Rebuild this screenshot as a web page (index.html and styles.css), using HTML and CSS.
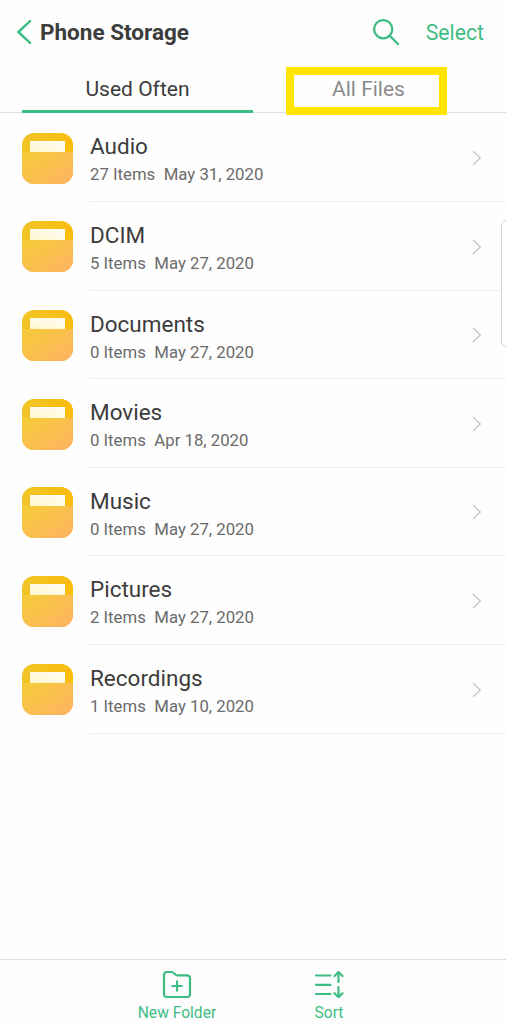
FILE: index.html
```html
<!DOCTYPE html>
<html lang="en">
<head>
<meta charset="utf-8">
<title>Phone Storage</title>
<link rel="stylesheet" href="styles.css">
</head>
<body>
<svg class="defs" width="0" height="0" aria-hidden="true">
  <defs>
    <linearGradient id="back" x1="0" y1="0" x2="1" y2="0"><stop offset="0" stop-color="#f1c428"/><stop offset="1" stop-color="#fabd0c"/></linearGradient>
    <linearGradient id="front" x1="0" y1="0" x2="1" y2="1"><stop offset="0" stop-color="#f5cc36"/><stop offset="1" stop-color="#ffb265"/></linearGradient>
    <linearGradient id="paper" x1="0" y1="1" x2="1" y2="0"><stop offset="0" stop-color="#fff6cf"/><stop offset="1" stop-color="#fffdf3"/></linearGradient>
    <symbol id="folder" viewBox="0 0 51 51">
      <rect width="51" height="51" rx="12" fill="url(#back)"/>
      <path d="M0 19H51V39A12 12 0 0 1 39 51H12A12 12 0 0 1 0 39Z" fill="url(#front)"/>
      <rect x="8" y="8" width="35" height="11" fill="url(#paper)"/>
    </symbol>
    <symbol id="chevron" viewBox="0 0 10 16">
      <path d="M1 1L8.2 8L1 15" fill="none" stroke="#c8c8c8" stroke-width="1.5"/>
    </symbol>
  </defs>
</svg>
<div class="screen">
  <header class="header">
    <svg class="back" viewBox="0 0 16 26"><path d="M14 2.2L2.4 13L14 23.8" fill="none" stroke="#3ebd83" stroke-width="2.5" stroke-linecap="round"/></svg>
    <h1 class="title"><span>Phone Storage</span></h1>
    <svg class="search" viewBox="0 0 28 28"><circle cx="11.2" cy="11.2" r="9.1" fill="none" stroke="#3ebd83" stroke-width="2.3"/><path d="M17.8 17.8L26 26" stroke="#3ebd83" stroke-width="2.4" stroke-linecap="round"/></svg>
    <span class="select">Select</span>
  </header>
  <nav class="tabs">
    <div class="tab active"><span>Used Often</span></div>
    <div class="tab"><span>All Files</span><i class="highlight"></i></div>
  </nav>
  <main class="list">
    <div class="row"><svg class="folder"><use href="#folder"/></svg><div class="info"><div><div class="name">Audio</div><div class="meta"><span>27 Items</span><span>May 31, 2020</span></div></div><svg class="chevron"><use href="#chevron"/></svg></div></div>
    <div class="row"><svg class="folder"><use href="#folder"/></svg><div class="info"><div><div class="name">DCIM</div><div class="meta"><span>5 Items</span><span>May 27, 2020</span></div></div><svg class="chevron"><use href="#chevron"/></svg></div></div>
    <div class="row"><svg class="folder"><use href="#folder"/></svg><div class="info"><div><div class="name">Documents</div><div class="meta"><span>0 Items</span><span>May 27, 2020</span></div></div><svg class="chevron"><use href="#chevron"/></svg></div></div>
    <div class="row"><svg class="folder"><use href="#folder"/></svg><div class="info"><div><div class="name">Movies</div><div class="meta"><span>0 Items</span><span>Apr 18, 2020</span></div></div><svg class="chevron"><use href="#chevron"/></svg></div></div>
    <div class="row"><svg class="folder"><use href="#folder"/></svg><div class="info"><div><div class="name">Music</div><div class="meta"><span>0 Items</span><span>May 27, 2020</span></div></div><svg class="chevron"><use href="#chevron"/></svg></div></div>
    <div class="row"><svg class="folder"><use href="#folder"/></svg><div class="info"><div><div class="name">Pictures</div><div class="meta"><span>2 Items</span><span>May 27, 2020</span></div></div><svg class="chevron"><use href="#chevron"/></svg></div></div>
    <div class="row"><svg class="folder"><use href="#folder"/></svg><div class="info"><div><div class="name">Recordings</div><div class="meta"><span>1 Items</span><span>May 10, 2020</span></div></div><svg class="chevron"><use href="#chevron"/></svg></div></div>
  </main>
  <footer class="toolbar">
    <div class="action">
      <svg viewBox="0 0 30 30"><path d="M2 5Q2 2 5 2H9.5Q11 2 12 3.2L13 4.3Q14 5.3 15.5 5.3H25Q28 5.3 28 8.3V24Q28 27 25 27H5Q2 27 2 24Z"/><path d="M15 11.3V20.7M10.3 16H19.7"/></svg>
      <span>New Folder</span>
    </div>
    <div class="action">
      <svg viewBox="0 0 30 30"><path d="M2 5.5H16.5M2 14.8H16.5M2 24H16.5M24.5 12V3M20.5 6L24.5 2L28.5 6M24.5 17V27M20.5 23.2L24.5 27.2L28.5 23.2"/></svg>
      <span>Sort</span>
    </div>
  </footer>
  <div class="edge-handle"></div>
</div>
</body>
</html>
```
FILE: styles.css
```css
* { box-sizing: border-box; }
body { margin: 0; background: #fefefe; font-family: Roboto, sans-serif; color: #3c3c3c; }
.defs { position: absolute; }
.screen { position: relative; width: 506px; height: 1023px; overflow: hidden; display: flex; flex-direction: column; }
.header { height: 64px; display: flex; align-items: center; padding: 0 22px 0 16px; }
.back { width: 16px; height: 26px; margin-right: 8px; }
.title { margin: 0; flex: 1; font-size: 22.5px; font-weight: 700; line-height: 26px; }
.search { width: 28px; height: 28px; margin: 0 26px 1px 0; }
.select { font-size: 21.2px; line-height: 26px; padding-top: 1px; color: #3ebd83; }
.tabs { height: 49px; display: flex; padding: 0 22px; border-bottom: 1px solid #dfdfdf; }
.tab { position: relative; flex: 1; height: 49px; text-align: center; font-size: 21px; line-height: 50px; color: #8a8a8a; }
.tab.active { color: #3c3c3c; border-bottom: 3px solid #3ebd83; }
.highlight { position: absolute; left: 33px; top: 3px; width: 161px; height: 48px; border: 8px solid #ffe500; }
.list { flex: 1; }
.row { height: 88.6px; display: flex; padding-left: 22.3px; }
.row:first-child { height: 89px; }
.folder { width: 51px; height: 51px; margin: 19.4px 16.7px 0 0; flex: none; }
.row:first-child .folder { margin-top: 19.6px; }
.info { flex: 1; display: flex; justify-content: space-between; padding: 20px 24px 0 0; border-bottom: 1px solid #ececec; }
.name { font-size: 22.5px; line-height: 27px; }
.meta { display: flex; gap: 8.5px; font-size: 16.75px; line-height: 29px; color: #6b6b6b; }
.chevron { width: 10px; height: 16px; margin-top: 16.7px; }
.toolbar { height: 64px; border-top: 1px solid #dcdcdc; display: flex; justify-content: center; padding: 10px 0 0; }
.action { width: 152px; display: flex; flex-direction: column; align-items: center; font-size: 15.6px; line-height: 20px; color: #3ebd83; }
.action svg { flex: none; width: 30px; height: 30px; margin-bottom: 3px; fill: none; stroke: #3ebd83; stroke-width: 2.2; stroke-linecap: round; stroke-linejoin: round; }
.edge-handle { position: absolute; left: 501px; top: 220px; width: 12px; height: 127px; border: 1px solid #d4d4d4; border-radius: 5px; background: #fefefe; }
```
